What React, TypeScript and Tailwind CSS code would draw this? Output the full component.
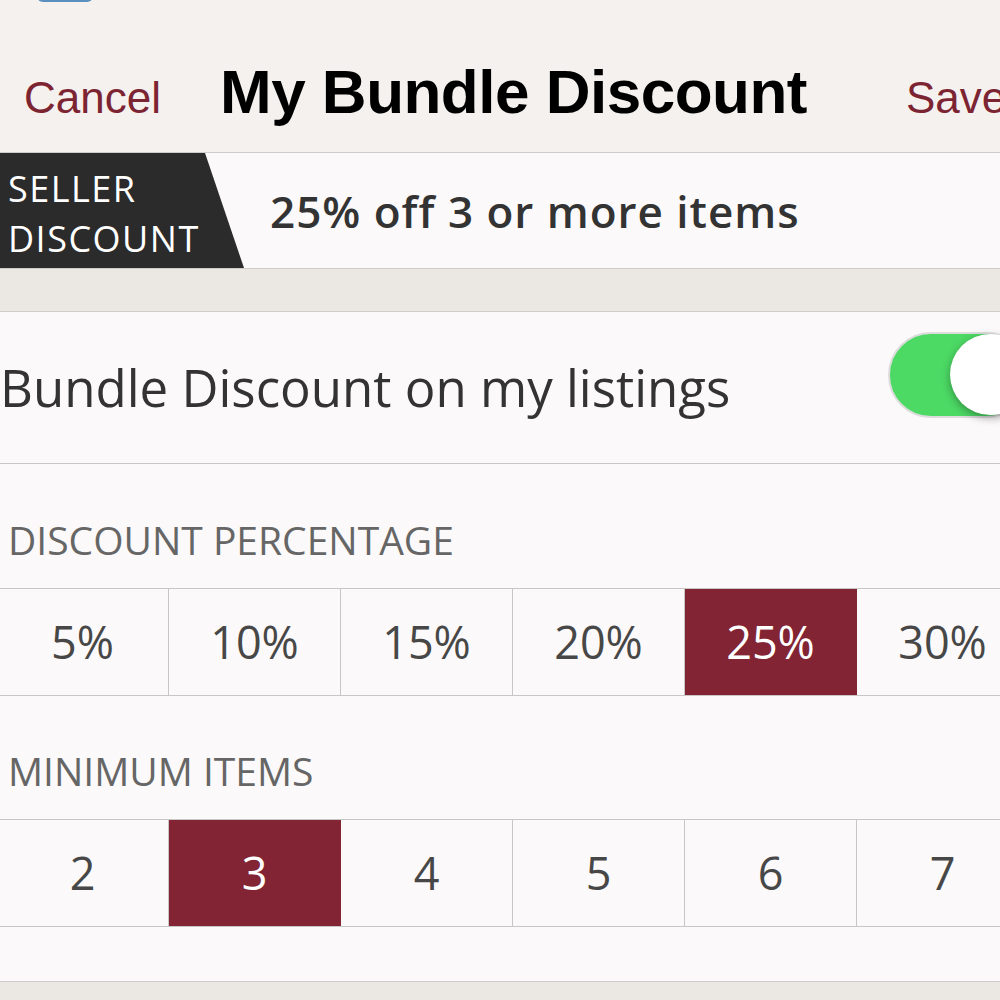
import { useState } from 'react';

const PERCENTS = ['5%', '10%', '15%', '20%', '25%', '30%'];
const ITEMS = ['2', '3', '4', '5', '6', '7'];

function OptionRow({
  options,
  selected,
  onSelect,
}: {
  options: string[];
  selected: string;
  onSelect: (v: string) => void;
}) {
  return (
    <div className="flex h-[108px] border-y border-[#c9c7c6] overflow-hidden">
      <div className="flex ml-[-3px]">
        {options.map((o) => (
          <button
            key={o}
            onClick={() => onSelect(o)}
            className={`w-[172px] shrink-0 flex items-center justify-center text-[45px] border-r ${
              o === selected
                ? 'bg-[#822433] text-white border-[#822433]'
                : 'text-[#474747] border-[#c9c7c6]'
            }`}
          >
            {o}
          </button>
        ))}
      </div>
    </div>
  );
}

export default function App() {
  const [enabled, setEnabled] = useState(true);
  const [percent, setPercent] = useState('25%');
  const [minItems, setMinItems] = useState('3');

  return (
    <div
      className="w-[1000px] h-[1000px] overflow-hidden bg-[#ebe8e3] flex flex-col"
      style={{ fontFamily: '"Open Sans", Lato, sans-serif' }}
    >
      {/* Nav bar */}
      <div className="relative h-[152px] shrink-0 bg-[#f4f1ee] flex items-baseline pt-[61px] font-['Liberation_Sans',Arial,sans-serif] leading-none whitespace-nowrap">
        <div className="absolute left-[37px] top-[-10px] w-[56px] h-[12px] rounded-full bg-[#5b8fbf]" />
        <span className="pl-[24px] w-[220px] text-[44px] text-[#7d2433]">Cancel</span>
        <span className="text-[62px] font-bold tracking-[-0.5px] text-black">My Bundle Discount</span>
        <span className="ml-auto mr-[-106px] w-[200px] text-[44px] text-[#7d2433]">Save</span>
      </div>

      {/* Seller discount banner */}
      <div className="h-[117px] shrink-0 flex items-stretch bg-[#fbf9f9] border-y border-[#cfcdcb]">
        <div className="w-[244px] shrink-0 bg-[#2b2b2b] [clip-path:polygon(0_0,205px_0,244px_100%,0_100%)] flex flex-col justify-center pt-[6px] pl-[8px] text-white text-[36px] tracking-[1.5px] leading-[50px] uppercase">
          <span>Seller</span>
          <span>Discount</span>
        </div>
        <div className="flex items-center pl-[26px] text-[44px] tracking-[1px] font-semibold text-[#333] whitespace-nowrap">
          25% off 3 or more items
        </div>
      </div>

      <div className="h-[42px] shrink-0" />

      {/* Settings card */}
      <div className="shrink-0 bg-[#fbf9f9] border-y border-[#cfcdcb] pb-[54px]">
        <div className="h-[152px] flex items-start justify-between border-b border-[#c9c7c6] overflow-hidden">
          <span className="self-center text-[51px] text-[#333] whitespace-nowrap">
            Bundle Discount on my listings
          </span>
          <button
            onClick={() => setEnabled(!enabled)}
            className={`relative mt-[20px] mr-[-29px] w-[141px] h-[86px] shrink-0 rounded-full border-2 ${
              enabled ? 'bg-[#4cd964] border-[#dcdcdc]' : 'bg-[#fbf9f9] border-[#e3e3e3]'
            }`}
          >
            <span
              className={`absolute top-[0px] w-[81px] h-[81px] rounded-full bg-white shadow-[0_3px_8px_rgba(0,0,0,0.35)] ${
                enabled ? 'left-[60px]' : 'left-0'
              }`}
            />
          </button>
        </div>

        <div className="pt-[56px] pb-[29px] pl-[8px] text-[39px] leading-none text-[#666]">
          DISCOUNT PERCENTAGE
        </div>
        <OptionRow options={PERCENTS} selected={percent} onSelect={setPercent} />

        <div className="pt-[55px] pb-[29px] pl-[8px] text-[39px] leading-none text-[#666]">
          MINIMUM ITEMS
        </div>
        <OptionRow options={ITEMS} selected={minItems} onSelect={setMinItems} />
      </div>
    </div>
  );
}
